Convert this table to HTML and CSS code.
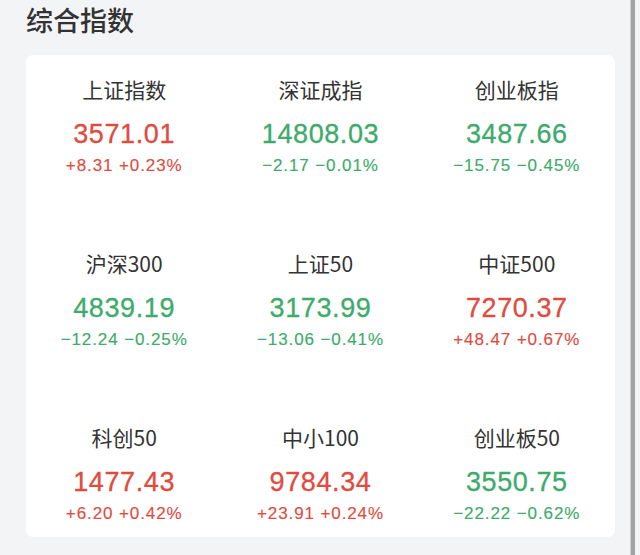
FILE: index.html
```html
<!DOCTYPE html>
<html lang="zh">
<head>
<meta charset="utf-8">
<title>综合指数</title>
<link rel="stylesheet" href="styles.css">
</head>
<body>
<div class="page">
  <h1 class="title">综合指数</h1>
  <div class="card">
    <div class="cell"><div class="name">上证指数</div><div class="value up">3571.01</div><div class="change up">+8.31 +0.23%</div></div>
    <div class="cell"><div class="name">深证成指</div><div class="value down">14808.03</div><div class="change down">−2.17 −0.01%</div></div>
    <div class="cell"><div class="name">创业板指</div><div class="value down">3487.66</div><div class="change down">−15.75 −0.45%</div></div>
    <div class="cell"><div class="name">沪深300</div><div class="value down">4839.19</div><div class="change down">−12.24 −0.25%</div></div>
    <div class="cell"><div class="name">上证50</div><div class="value down">3173.99</div><div class="change down">−13.06 −0.41%</div></div>
    <div class="cell"><div class="name">中证500</div><div class="value up">7270.37</div><div class="change up">+48.47 +0.67%</div></div>
    <div class="cell"><div class="name">科创50</div><div class="value up">1477.43</div><div class="change up">+6.20 +0.42%</div></div>
    <div class="cell"><div class="name">中小100</div><div class="value up">9784.34</div><div class="change up">+23.91 +0.24%</div></div>
    <div class="cell"><div class="name">创业板50</div><div class="value down">3550.75</div><div class="change down">−22.22 −0.62%</div></div>
  </div>
</div>
<div class="scrollbar"></div>
</body>
</html>
```

FILE: styles.css
```css
html, body {
  margin: 0;
  padding: 0;
  background: #f3f4f6;
  height: 100%;
  overflow: hidden;
}
.page {
  padding: 0 25px 0 26px;
  width: 589px;
  font-family: "Liberation Sans", "Noto Sans CJK SC", sans-serif;
}
.title {
  margin: 0;
  height: 40px;
  line-height: 40px;
  font-size: 27px;
  font-weight: 500;
  color: #333333;
  font-family: "Noto Sans CJK SC", sans-serif;
}
.card {
  margin-top: 15px;
  background: #ffffff;
  border-radius: 7px;
  padding: 19px 0 11px;
  display: grid;
  grid-template-columns: repeat(3, 1fr);
  row-gap: 70px;
}
.cell {
  display: flex;
  flex-direction: column;
  align-items: center;
}
.name {
  height: 30px;
  line-height: 30px;
  font-size: 21px;
  color: #333333;
  font-family: "Noto Sans CJK SC", sans-serif;
  margin-bottom: 10px;
}
.value {
  height: 40px;
  line-height: 40px;
  font-size: 27px;
  letter-spacing: 0.6px;
  -webkit-text-stroke: 0.3px currentColor;
}
.change {
  height: 24px;
  line-height: 24px;
  font-size: 17px;
  letter-spacing: 0.9px;
  -webkit-text-stroke: 0.15px currentColor;
}
.up { color: #df4b3f; }
.down { color: #3dab6b; }
.scrollbar {
  position: fixed;
  top: 0;
  bottom: 0;
  left: 630px;
  width: 4px;
  border-left: 1px solid #cfcfcf;
  background: #a2a2a2;
}
```
